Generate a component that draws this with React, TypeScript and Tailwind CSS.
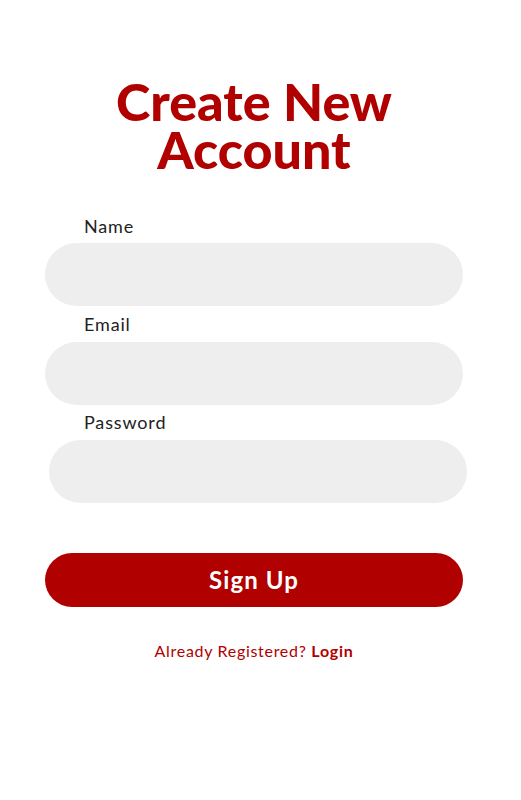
export default function App() {
  const font = { fontFamily: 'Lato, "Noto Sans", sans-serif' };
  return (
    <div className="min-h-[800px] w-[521px] bg-white" style={font}>
      <div className="ml-[45px] w-[418px] pt-[77px]">
        <h1 className="text-center text-[52px] leading-[48px] font-black text-[#b10000]">
          Create New
          <br />
          Account
        </h1>
        <form className="mt-[41px] flex flex-col">
          <label className="pl-[39px] text-[18px] leading-[24px] tracking-[0.85px] text-[#222222]">Name</label>
          <div className="mt-[5px] h-[63px] w-[418px] rounded-full bg-[#eeeeee]" />
          <label className="mt-[6px] pl-[39px] text-[18px] leading-[24px] tracking-[0.85px] text-[#222222]">Email</label>
          <div className="mt-[6px] h-[63px] w-[418px] rounded-full bg-[#eeeeee]" />
          <label className="mt-[5px] pl-[39px] text-[18px] leading-[24px] tracking-[0.85px] text-[#222222]">Password</label>
          <div className="ml-[4px] mt-[6px] h-[63px] w-[418px] rounded-full bg-[#eeeeee]" />
          <button
            type="button"
            className="mt-[50px] flex h-[54px] w-[418px] items-center justify-center rounded-full bg-[#b10000] text-[24px] font-bold tracking-[1.1px] text-white"
          >
            Sign Up
          </button>
          <p className="mt-[34px] text-center text-[16px] leading-[20px] tracking-[0.7px] text-[#b10000]">
            Already Registered? <span className="font-bold">Login</span>
          </p>
        </form>
      </div>
    </div>
  );
}
